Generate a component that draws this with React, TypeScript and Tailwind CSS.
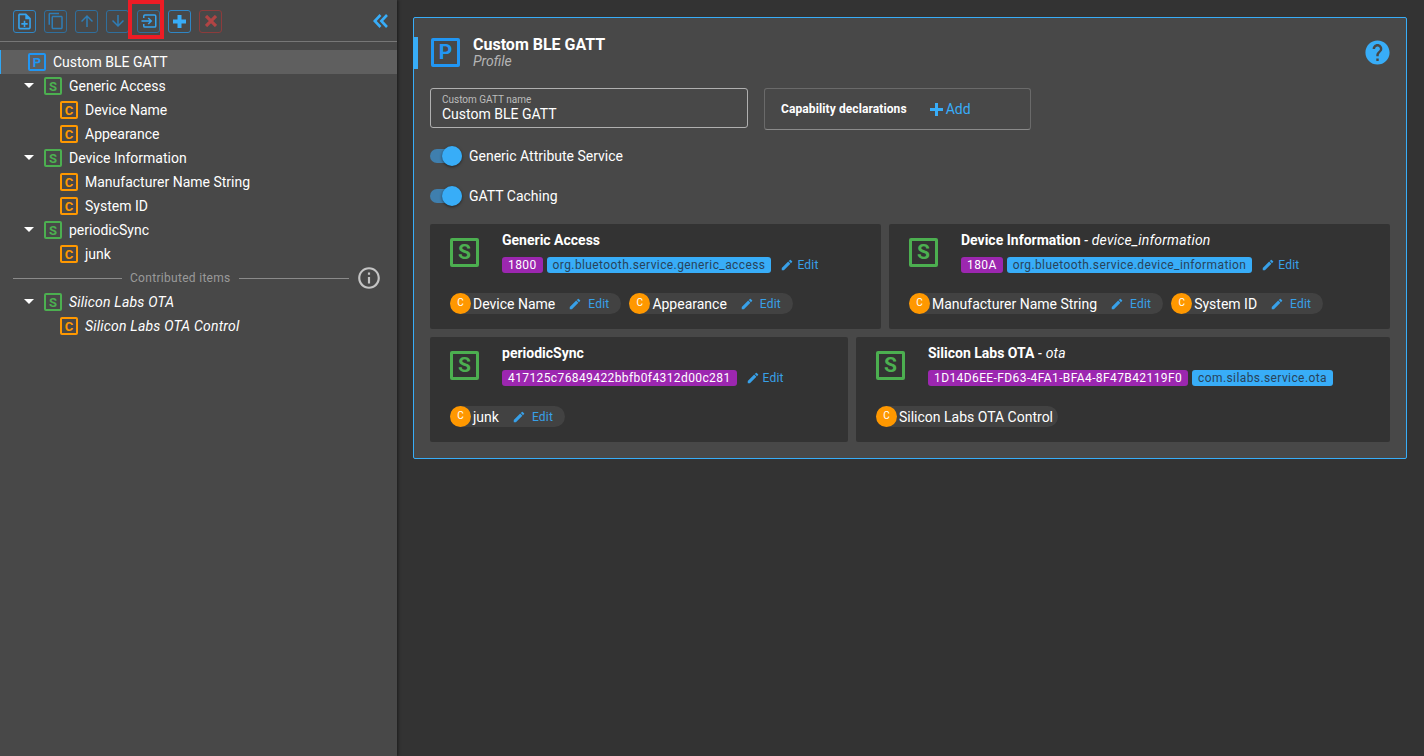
import React from 'react'
import {
  MdArrowDownward,
  MdArrowUpward,
  MdContentCopy,
  MdEdit,
  MdHelp,
  MdInfoOutline,
  MdOutlineNoteAdd,
} from 'react-icons/md'

const letterColors = {
  P: 'border-[#2196f3] text-[#2196f3]',
  S: 'border-[#4caf50] text-[#4caf50]',
  C: 'border-[#ff9800] text-[#ff9800]',
}

type Letter = keyof typeof letterColors

const TreeIcon: React.FC<{ letter: Letter }> = ({ letter }) => (
  <span
    className={`flex size-[18px] shrink-0 items-center justify-center rounded-[2px] border-2 text-[13px] leading-none font-bold not-italic ${letterColors[letter]}`}
  >
    {letter}
  </span>
)

const TreeRow: React.FC<{
  letter: Letter
  label: string
  depth: number
  italic?: boolean
  active?: boolean
}> = ({ letter, label, depth, italic, active }) => {
  const indent = depth === 0 ? 'pl-[27px]' : depth === 1 ? 'pl-[44px]' : 'pl-[60px]'
  return (
    <div
      className={`relative flex h-6 items-center gap-[7px] text-sm text-white ${indent} ${active ? 'border-l border-[#2fa7f5] bg-[#5f5f5f]' : ''} ${italic ? 'tracking-[0.2px] italic' : ''}`}
    >
      {depth === 1 && (
        <span className="absolute top-[9px] left-[24px] h-0 w-0 border-x-[5px] border-t-[5px] border-x-transparent border-t-white" />
      )}
      <TreeIcon letter={letter} />
      <span>{label}</span>
    </div>
  )
}

const ToolButton: React.FC<{ children: React.ReactNode; className: string }> = ({
  children,
  className,
}) => (
  <button
    className={`flex size-[23px] items-center justify-center rounded-[3px] border ${className}`}
  >
    {children}
  </button>
)

const ImportIcon: React.FC = () => (
  <svg width="18" height="18" viewBox="0 0 24 24" fill="none" stroke="currentColor" strokeWidth="2">
    <path d="M5 8V5.500A1.500 1.500 0 0 1 6.500 4H19.500A1.500 1.500 0 0 1 21 5.500V18.500A1.500 1.500 0 0 1 19.500 20H6.500A1.500 1.500 0 0 1 5 18.500V16" />
    <path d="M2 12H15M11 8L15 12L11 16" />
  </svg>
)

const PlusIcon: React.FC<{ size: number; width: number }> = ({ size, width }) => (
  <svg width={size} height={size} viewBox={`0 0 ${size} ${size}`} stroke="currentColor" strokeWidth={width}>
    <path d={`M${size / 2} 0V${size}M0 ${size / 2}H${size}`} />
  </svg>
)

const CrossIcon: React.FC = () => (
  <svg width="12" height="12" viewBox="0 0 12 12" stroke="currentColor" strokeWidth="3.2">
    <path d="M1 1L11 11M11 1L1 11" />
  </svg>
)

const CollapseIcon: React.FC = () => (
  <svg width="15" height="14" viewBox="0 0 15 14" fill="none" stroke="currentColor" strokeWidth="2.600">
    <path d="M7.500 1L1.800 7L7.500 13M14 1L8.300 7L14 13" />
  </svg>
)

const Sidebar: React.FC = () => (
  <aside className="flex w-[397px] shrink-0 flex-col bg-[#484848] shadow-[1px_0_3px_rgba(0,0,0,0.5)]">
    <div className="relative flex h-[42px] items-center gap-2 border-b border-[#777] pt-px pr-[9px] pl-[13px]">
      <ToolButton className="border-[#2f86c5] text-[#35a3ee]">
        <MdOutlineNoteAdd size={19} />
      </ToolButton>
      <ToolButton className="border-[#2f6f9d] text-[#2f7db5]">
        <MdContentCopy size={18} />
      </ToolButton>
      <ToolButton className="border-[#2f6f9d] text-[#2f7db5]">
        <MdArrowUpward size={18} />
      </ToolButton>
      <ToolButton className="border-[#2f6f9d] text-[#2f7db5]">
        <MdArrowDownward size={18} />
      </ToolButton>
      <ToolButton className="border-[#2f6f9d] text-[#35a3ee]">
        <ImportIcon />
      </ToolButton>
      <ToolButton className="border-[#2f86c5] text-[#38adf8]">
        <PlusIcon size={13} width={4} />
      </ToolButton>
      <ToolButton className="border-[#8c3c3c] text-[#b04444]">
        <CrossIcon />
      </ToolButton>
      <span className="ml-auto text-[#38adf8]">
        <CollapseIcon />
      </span>
      {/* callout drawn over the screenshot */}
      <span className="absolute top-0 left-[128px] h-[39px] w-9 border-4 border-[#ee1c25]" />
    </div>
    <div className="pt-2">
      <TreeRow letter="P" label="Custom BLE GATT" depth={0} active />
      <TreeRow letter="S" label="Generic Access" depth={1} />
      <TreeRow letter="C" label="Device Name" depth={2} />
      <TreeRow letter="C" label="Appearance" depth={2} />
      <TreeRow letter="S" label="Device Information" depth={1} />
      <TreeRow letter="C" label="Manufacturer Name String" depth={2} />
      <TreeRow letter="C" label="System ID" depth={2} />
      <TreeRow letter="S" label="periodicSync" depth={1} />
      <TreeRow letter="C" label="junk" depth={2} />
      <div className="flex h-6 items-center pr-[15px] pl-[13px] text-xs tracking-[0.3px] text-[#9a9a9a]">
        <span className="h-px w-[109px] bg-[#8a8a8a]" />
        <span className="px-2">Contributed items</span>
        <span className="h-px w-[109px] flex-1 bg-[#8a8a8a]" />
        <MdInfoOutline size={26} className="ml-[7px] text-[#c4c4c4]" />
      </div>
      <TreeRow letter="S" label="Silicon Labs OTA" depth={1} italic />
      <TreeRow letter="C" label="Silicon Labs OTA Control" depth={2} italic />
    </div>
  </aside>
)

const Toggle: React.FC<{ label: string }> = ({ label }) => (
  <div className="flex h-10 items-center gap-[7px] text-sm text-white">
    <span className="relative h-[14px] w-8 rounded-full bg-[#3f7fae]">
      <span className="absolute top-[-3px] right-0 size-5 rounded-full bg-[#38adf8] shadow-[0_1px_3px_rgba(0,0,0,0.5)]" />
    </span>
    <span>{label}</span>
  </div>
)

const EditLink: React.FC<{ tight?: boolean }> = ({ tight }) => (
  <span
    className={`flex items-center text-xs tracking-[0.2px] text-[#38a0e8] ${tight ? 'gap-[3px]' : 'gap-[6px]'}`}
  >
    <MdEdit size={14} />
    Edit
  </span>
)

const CharChip: React.FC<{ label: string; edit?: boolean }> = ({ label, edit = true }) => (
  <span className="flex h-[21px] items-center rounded-full bg-[#424242] pr-[5px] text-sm text-white">
    <span className="mr-[2px] flex size-[21px] items-center justify-center rounded-full bg-[#ff9800] text-[10px] text-white">
      C
    </span>
    <span>{label}</span>
    {edit && (
      <span className="mr-[7px] ml-[13px]">
        <EditLink />
      </span>
    )}
  </span>
)

const Tag: React.FC<{ children: React.ReactNode; kind: 'uuid' | 'id' }> = ({ children, kind }) => (
  <span
    className={`flex h-4 items-center rounded-[3px] px-1.5 text-xs tracking-[0.4px] ${kind === 'uuid' ? 'bg-[#9c27b0] text-white' : 'bg-[#38adf8] text-[#28435a]'}`}
  >
    {children}
  </span>
)

const ServiceCard: React.FC<{
  name: string
  suffix?: string
  uuid: string
  id?: string
  chips: { label: string; edit?: boolean }[]
  editable?: boolean
  className: string
}> = ({ name, suffix, uuid, id, chips, editable = true, className }) => (
  <div className={`h-[105px] rounded-[2px] bg-[#333333] pt-[7px] pl-5 ${className}`}>
    <div className="flex h-[51px]">
      <span className="mt-[7px] flex size-[29px] items-center justify-center rounded-[2px] border-[3px] border-[#4caf50] text-[21px] leading-none font-bold text-[#4caf50]">
        S
      </span>
      <div className="ml-[23px] flex flex-col">
        <div className="h-[18px] text-sm leading-[18px] text-white">
          <span className="font-bold">{name}</span>
          {suffix && <span className="tracking-[0.2px] italic"> - {suffix}</span>}
        </div>
        <div className="mt-2 flex items-center gap-1">
          <Tag kind="uuid">{uuid}</Tag>
          {id && <Tag kind="id">{id}</Tag>}
          {editable && (
            <span className="ml-[5px]">
              <EditLink tight />
            </span>
          )}
        </div>
      </div>
    </div>
    <div className="mt-[11px] flex gap-2">
      {chips.map((chip) => (
        <CharChip key={chip.label} {...chip} />
      ))}
    </div>
  </div>
)

const App: React.FC = () => {
  return (
    <div className="flex h-[756px] w-[1424px] overflow-hidden bg-[#333333] font-['Roboto',sans-serif]">
      <Sidebar />
      <main className="flex-1 pt-[17px] pr-[17px] pl-4">
        <section className="rounded-[2px] border border-[#38adf8] bg-[#484848] pt-[19px] pr-4 pb-[16px] pl-4">
          <header className="relative flex h-[34px] items-start">
            <span className="absolute top-0 -left-4 h-[32px] w-1 bg-[#38adf8]" />
            <span className="mt-px ml-px flex size-[29px] items-center justify-center rounded-[2px] border-[3px] border-[#2196f3] text-[21px] leading-none font-bold text-[#2196f3]">
              P
            </span>
            <div className="ml-[13px] flex flex-col">
              <span className="text-base leading-4 font-bold text-white">Custom BLE GATT</span>
              <span className="text-sm leading-4 text-[#b5b5b5] italic">Profile</span>
            </div>
            <MdHelp size={29} className="mt-px -mr-[2px] ml-auto text-[#38adf8]" />
          </header>
          <div className="mt-[17px] flex gap-4">
            <div className="flex h-10 w-[318px] flex-col justify-center rounded-[3px] border border-[#b0b0b0] px-[11px]">
              <span className="text-[10px] leading-3 text-[#bdbdbd]">Custom GATT name</span>
              <span className="text-sm leading-[17px] text-white">Custom BLE GATT</span>
            </div>
            <div className="flex h-[42px] w-[267px] items-center rounded-[3px] border border-[#6a6a6a] border-b-[#8a8a8a] px-4">
              <span className="text-xs font-bold tracking-[0.1px] text-white">
                Capability declarations
              </span>
              <span className="ml-[23px] flex items-center gap-[3px] text-sm text-[#38adf8]">
                <PlusIcon size={13} width={3} />
                Add
              </span>
            </div>
          </div>
          <div className="mt-1.5">
            <Toggle label="Generic Attribute Service" />
            <Toggle label="GATT Caching" />
          </div>
          <div className="mt-2 flex flex-col gap-2">
            <div className="flex gap-2">
              <ServiceCard
                className="w-[451px]"
                name="Generic Access"
                uuid="1800"
                id="org.bluetooth.service.generic_access"
                chips={[{ label: 'Device Name' }, { label: 'Appearance' }]}
              />
              <ServiceCard
                className="flex-1"
                name="Device Information"
                suffix="device_information"
                uuid="180A"
                id="org.bluetooth.service.device_information"
                chips={[{ label: 'Manufacturer Name String' }, { label: 'System ID' }]}
              />
            </div>
            <div className="flex gap-2">
              <ServiceCard
                className="w-[418px]"
                name="periodicSync"
                uuid="417125c76849422bbfb0f4312d00c281"
                chips={[{ label: 'junk' }]}
              />
              <ServiceCard
                className="flex-1"
                name="Silicon Labs OTA"
                suffix="ota"
                uuid="1D14D6EE-FD63-4FA1-BFA4-8F47B42119F0"
                id="com.silabs.service.ota"
                editable={false}
                chips={[{ label: 'Silicon Labs OTA Control', edit: false }]}
              />
            </div>
          </div>
        </section>
      </main>
    </div>
  )
}

export default App
